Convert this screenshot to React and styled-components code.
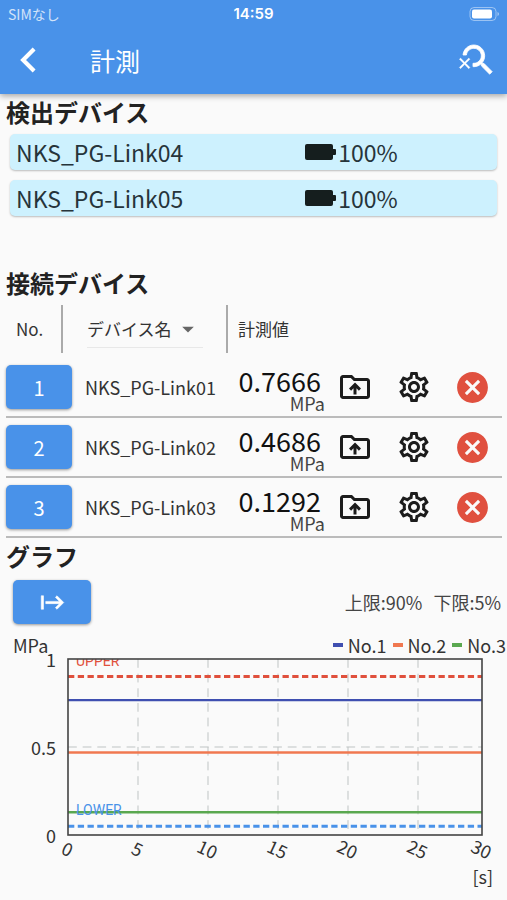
import React, { useState } from 'react'
import styled, { createGlobalStyle } from 'styled-components'
import {
    MdArrowBackIosNew,
    MdArrowDropDown,
    MdOutlineDriveFolderUpload,
    MdOutlineSettings,
    MdCancel,
    MdStart,
} from 'react-icons/md'

const GlobalStyle = createGlobalStyle`
    * {
        box-sizing: border-box;
    }

    body {
        margin: 0;
        background: #fafafa;
        color: #222;
        font-family: "Noto Sans CJK JP", "Noto Sans", sans-serif;
        font-size: 18px;
    }

    button, select {
        font-family: inherit;
        border: 0;
        padding: 0;
        cursor: pointer;
    }
`

const Header = styled.header`
    background: #4992e9;
    color: white;
    box-shadow: 0 2px 6px rgba(0, 0, 0, .35);
`

const StatusBar = styled.div`
    display: grid;
    grid-template-columns: 1fr auto 1fr;
    align-items: center;
    height: 28px;
    padding: 0 8px;
    font-size: 14px;
    line-height: 20px;
`

const Carrier = styled.span`
    opacity: .75;
`

const Clock = styled.span`
    font-family: Inter, sans-serif;
    font-size: 15px;
    font-weight: 600;
`

const StatusBattery = styled.svg`
    justify-self: end;
`

const AppBar = styled.div`
    display: flex;
    align-items: center;
    height: 66px;
    padding: 0 9px 2px 14px;
`

const Title = styled.h1`
    flex: 1;
    margin: 0 0 0 48px;
    font-size: 25px;
    font-weight: 400;
    line-height: 36px;
`

const IconButton = styled.button`
    display: flex;
    align-items: center;
    justify-content: center;
    background: none;
    color: ${props => props.$color || 'white'};
`

const BackIcon = styled(MdArrowBackIosNew)`
    path:not([fill="none"]) {
        stroke: currentColor;
        stroke-width: 1;
    }
`

const StartIcon = styled(MdStart)`
    path:not([fill="none"]) {
        stroke: currentColor;
        stroke-width: .5;
    }
`

const SectionTitle = styled.h2`
    margin: 0;
    padding: 0 6px;
    font-size: 24px;
    font-weight: 700;
    line-height: 36px;
`

const DetectedList = styled.ul`
    display: flex;
    flex-direction: column;
    gap: 10px;
    margin: 0;
    padding: 4px 10px 49px;
    list-style: none;
`

const DetectedItem = styled.li`
    display: grid;
    grid-template-columns: 14fr 9fr;
    align-items: center;
    height: 36px;
    padding: 0 6px;
    border-radius: 5px;
    background: #cdf1fe;
    box-shadow: 0 1px 2px rgba(0, 0, 0, .25);
    color: #26343a;
    font-size: 23px;
    line-height: 36px;
`

const Battery = styled.span`
    display: flex;
    align-items: center;
    gap: 2px;
`

const DeviceTable = styled.table`
    display: block;
    margin: 0 5px 0 6px;

    thead, tbody {
        display: block;
    }

    th, td {
        padding: 0;
        font-weight: 400;
        text-align: left;
    }
`

const HeadRow = styled.tr`
    display: grid;
    grid-template-columns: 57px 1fr 274px;
    height: 47px;
    margin: 4px 0 6px;
    color: #333;
    font-size: 17px;
    line-height: 48px;
`

const HeadCell = styled.th`
    padding-left: 10px !important;
    border-right: ${props => props.$last ? 0 : '2px solid #aaa'};
`

const SortBox = styled.div`
    display: flex;
    align-items: center;
    width: 116px;
    height: 43px;
    margin-left: 14px;
    padding-top: 5px;
    border-bottom: 1px solid #e8e8e8;

    select {
        width: 87px;
        appearance: none;
        background: none;
        color: #333;
        font-size: 17px;
        line-height: 28px;
    }

    svg {
        flex: none;
        color: #666;
        pointer-events: none;
    }
`

const DeviceRow = styled.tr`
    display: grid;
    grid-template-columns: 66px 1fr 98px 59px 59px 59px;
    align-items: center;
    height: 60px;
    border-bottom: 2px solid #bbb;

    ${IconButton} {
        margin: 0 auto;
    }
`

const BlueButton = styled.button`
    display: flex;
    align-items: center;
    justify-content: center;
    width: ${props => props.$wide ? 78 : 66}px;
    height: 44px;
    border-radius: 5px;
    background: #4992e9;
    color: white;
    font-size: 20px;
    box-shadow: 0 1px 3px rgba(0, 0, 0, .4);
`

const DeviceName = styled.td`
    padding-left: 13px !important;
    font-size: 18px;
    white-space: nowrap;
    color: #333;
`

const ValueCell = styled.td`
    display: flex;
    flex-direction: column;
    align-items: flex-end;
    padding-top: 6px !important;
`

const Value = styled.span`
    padding-right: 4px;
    color: #111;
    font-size: 27px;
    line-height: 26px;
`

const Unit = styled.span`
    color: #444;
    font-size: 18px;
    line-height: 18px;
`

const GraphBar = styled.div`
    display: flex;
    align-items: center;
    justify-content: space-between;
    padding: 6px 6px 0 13px;
`

const Limits = styled.div`
    display: flex;
    gap: 11px;
    color: #444;
    font-size: 18px;
`

const Legend = styled.div`
    display: flex;
    align-items: center;
    justify-content: space-between;
    height: 28px;
    margin-top: 7px;
    padding: 0 1px 0 13px;
    color: #333;
    line-height: 28px;
`

const LegendItems = styled.div`
    display: flex;
    gap: 6px;
`

const LegendItem = styled.span`
    display: flex;
    align-items: center;
    gap: 5px;

    &::before {
        content: "";
        width: 10px;
        height: 4px;
        background: ${props => props.$color};
    }
`

const ChartSvg = styled.svg`
    display: block;
    width: 100%;
    height: auto;
    margin-top: -7px;
    overflow: visible;

    text {
        fill: #333;
        font-size: 18px;
    }

    .limit {
        font-family: Roboto, sans-serif;
        font-size: 14px;
    }
`

const detected = [
    { name: 'NKS_PG-Link04', battery: 100 },
    { name: 'NKS_PG-Link05', battery: 100 },
]

const connected = [
    { no: 1, name: 'NKS_PG-Link01', value: 0.7666, color: '#3f4fb0' },
    { no: 2, name: 'NKS_PG-Link02', value: 0.4686, color: '#f07850' },
    { no: 3, name: 'NKS_PG-Link03', value: 0.1292, color: '#5aa850' },
]

const upper = 90
const lower = 5

const LEFT = 68
const RIGHT = 482
const TOP = 7
const BOTTOM = 183

// 14 units per second, the last label is held at the right edge
const toX = sec => Math.min(LEFT + 14 * sec, RIGHT)
const toY = value => BOTTOM - (BOTTOM - TOP) * value

const Chart = () => {
    return (
        <ChartSvg viewBox="0 0 507 240" role="img" aria-label="グラフ">
            <defs>
                <clipPath id="plot">
                    <rect x={LEFT} y={TOP} width={RIGHT - LEFT} height={BOTTOM - TOP} />
                </clipPath>
            </defs>
            <g stroke="#bfc4c4" strokeDasharray="8.8 5.85">
                {[5, 10, 15, 20, 25].map(sec => (
                    <line key={sec} x1={toX(sec)} x2={toX(sec)} y1={TOP} y2={BOTTOM} />
                ))}
                <line x1={LEFT} x2={RIGHT} y1={toY(0.5)} y2={toY(0.5)} />
            </g>
            <g strokeWidth="2.4">
                {connected.map(({ no, value, color }) => (
                    <line key={no} x1={LEFT} x2={RIGHT} y1={toY(value)} y2={toY(value)} stroke={color} />
                ))}
            </g>
            <g strokeWidth="3" strokeDasharray="6.3 3.45">
                <line x1={LEFT} x2={RIGHT} y1={toY(upper / 100)} y2={toY(upper / 100)} stroke="#e0503c" />
                <line x1={LEFT} x2={RIGHT} y1={toY(lower / 100)} y2={toY(lower / 100)} stroke="#4992e9" />
            </g>
            <g clipPath="url(#plot)">
                <text className="limit" x="76" y="14" style={{ fill: '#e0503c' }}>UPPER</text>
                <text className="limit" x="76" y="163" style={{ fill: '#4992e9' }}>LOWER</text>
            </g>
            <rect x={LEFT} y={TOP} width={RIGHT - LEFT} height={BOTTOM - TOP} fill="none" stroke="#444" strokeWidth="1.6" />
            {[0, 0.5, 1].map(value => (
                <text key={value} x="56" y={toY(value) + 8} textAnchor="end">{value}</text>
            ))}
            {[0, 5, 10, 15, 20, 25, 30].map(sec => (
                <text
                    key={sec}
                    transform={`translate(${toX(sec) - 1} 198) rotate(25)`}
                    y="6"
                    textAnchor="middle"
                >
                    {sec}
                </text>
            ))}
            <text x="493" y="232" textAnchor="end">[s]</text>
        </ChartSvg>
    )
}

const SearchOffIcon = () => (
    <svg width="40" height="40" viewBox="0 0 24 24" fill="currentColor">
        <path
            stroke="currentColor"
            strokeWidth=".5"
            d="M15.5 14h-.79l-.28-.27C15.41 12.59 16 11.11 16 9.5 16 5.91 13.09 3 9.5 3 6.08 3 3.28 5.64 3.03 9h2.02C5.3 6.75 7.18 5 9.5 5 11.99 5 14 7.01 14 9.5S11.99 14 9.5 14c-.17 0-.33-.03-.5-.05v2.02c.17.02.33.03.5.03 1.61 0 3.09-.59 4.23-1.57l.27.28v.79l5 4.99L20.49 19l-4.99-5z"
        />
        <path d="M6.47 10.82 4 13.29l-2.47-2.47-.71.71L3.29 14 .82 16.47l.71.71L4 14.71l2.47 2.47.71-.71L4.71 14l2.47-2.47z" stroke="currentColor" strokeWidth=".2" />
    </svg>
)

const App = () => {

    const [sortKey, setSortKey] = useState('name')

    return (
        <>
            <GlobalStyle />
            <Header>
                <StatusBar>
                    <Carrier>SIMなし</Carrier>
                    <Clock>14:59</Clock>
                    <StatusBattery width="30" height="14" viewBox="0 0 30 14">
                        <rect x="1" y="0.5" width="26" height="13" rx="4" fill="none" stroke="white" strokeOpacity=".45" />
                        <rect x="3" y="2.5" width="20" height="9" rx="2" fill="white" />
                        <path d="M28.5 5v4q1.5-.6 1.5-2t-1.5-2z" fill="white" fillOpacity=".5" />
                    </StatusBattery>
                </StatusBar>
                <AppBar>
                    <IconButton aria-label="戻る"><BackIcon size={28} /></IconButton>
                    <Title>計測</Title>
                    <IconButton aria-label="検索停止"><SearchOffIcon /></IconButton>
                </AppBar>
            </Header>
            <main>
                <SectionTitle>検出デバイス</SectionTitle>
                <DetectedList>
                    {detected.map(({ name, battery }) => (
                        <DetectedItem key={name}>
                            <span>{name}</span>
                            <Battery>
                                <svg width="31" height="16" viewBox="0 0 31 16" fill="#151e1e">
                                    <rect width="28" height="16" rx="2" />
                                    <rect x="27" y="5" width="4" height="6" rx="1" />
                                </svg>
                                {battery}%
                            </Battery>
                        </DetectedItem>
                    ))}
                </DetectedList>
                <SectionTitle>接続デバイス</SectionTitle>
                <DeviceTable>
                    <thead>
                        <HeadRow>
                            <HeadCell>No.</HeadCell>
                            <HeadCell>
                                <SortBox>
                                    <select
                                        aria-label="並べ替え"
                                        value={sortKey}
                                        onChange={e => setSortKey(e.target.value)}
                                    >
                                        <option value="name">デバイス名</option>
                                    </select>
                                    <MdArrowDropDown size={28} />
                                </SortBox>
                            </HeadCell>
                            <HeadCell $last>計測値</HeadCell>
                        </HeadRow>
                    </thead>
                    <tbody>
                        {connected.map(({ no, name, value }) => (
                            <DeviceRow key={no}>
                                <td><BlueButton>{no}</BlueButton></td>
                                <DeviceName>{name}</DeviceName>
                                <ValueCell>
                                    <Value>{value.toFixed(4)}</Value>
                                    <Unit>MPa</Unit>
                                </ValueCell>
                                <td>
                                    <IconButton $color="#1c1c1c" aria-label="保存"><MdOutlineDriveFolderUpload size={36} /></IconButton>
                                </td>
                                <td>
                                    <IconButton $color="#1c1c1c" aria-label="設定"><MdOutlineSettings size={36} /></IconButton>
                                </td>
                                <td>
                                    <IconButton $color="#e0503f" aria-label="切断"><MdCancel size={37} /></IconButton>
                                </td>
                            </DeviceRow>
                        ))}
                    </tbody>
                </DeviceTable>
                <SectionTitle>グラフ</SectionTitle>
                <GraphBar>
                    <BlueButton $wide aria-label="開始"><StartIcon size={27} /></BlueButton>
                    <Limits>
                        <span>上限:{upper}%</span>
                        <span>下限:{lower}%</span>
                    </Limits>
                </GraphBar>
                <Legend>
                    <span>MPa</span>
                    <LegendItems>
                        {connected.map(({ no, color }) => (
                            <LegendItem key={no} $color={color}>No.{no}</LegendItem>
                        ))}
                    </LegendItems>
                </Legend>
                <Chart />
            </main>
        </>
    )
}

export default App
